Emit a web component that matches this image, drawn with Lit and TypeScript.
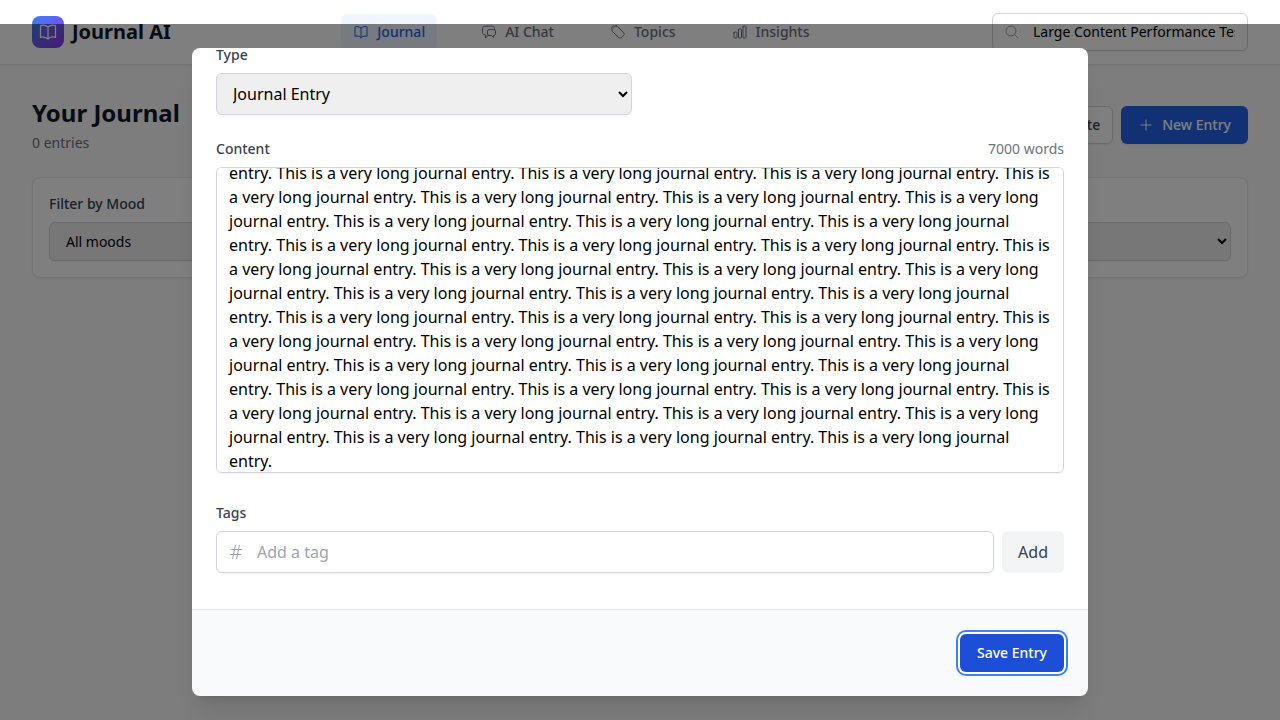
import { LitElement, html, css, svg } from "lit";
import { customElement, query } from "lit/decorators.js";
import { classMap } from "lit/directives/class-map.js";

const ICONS: Record<string, string[]> = {
  book: [
    "M12 6.042A8.967 8.967 0 0 0 6 3.75c-1.052 0-2.062.18-3 .512v14.25A8.987 8.987 0 0 1 6 18c2.305 0 4.408.867 6 2.292m0-14.25a8.966 8.966 0 0 1 6-2.292c1.052 0 2.062.18 3 .512v14.25A8.987 8.987 0 0 0 18 18a8.967 8.967 0 0 0-6 2.292m0-14.25v14.25",
  ],
  chat: [
    "M20.25 8.511c.884.284 1.5 1.128 1.5 2.097v4.286c0 1.136-.847 2.1-1.98 2.193-.34.027-.68.052-1.02.072v3.091l-3-3c-1.354 0-2.694-.055-4.02-.163a2.115 2.115 0 0 1-.825-.242m9.345-8.334a2.126 2.126 0 0 0-.476-.095 48.64 48.64 0 0 0-8.048 0c-1.131.094-1.976 1.057-1.976 2.192v4.286c0 .837.46 1.58 1.155 1.951m9.345-8.334V6.637c0-1.621-1.152-3.026-2.76-3.235A48.455 48.455 0 0 0 11.25 3c-2.115 0-4.198.137-6.24.402-1.608.209-2.76 1.614-2.76 3.235v6.226c0 1.621 1.152 3.026 2.76 3.235.577.075 1.157.14 1.74.194V21l4.155-4.155",
  ],
  tag: [
    "M9.568 3H5.25A2.25 2.25 0 0 0 3 5.25v4.318c0 .597.237 1.17.659 1.591l9.581 9.581c.699.699 1.78.872 2.607.33a18.095 18.095 0 0 0 5.223-5.223c.542-.827.369-1.908-.33-2.607L11.16 3.66A2.25 2.25 0 0 0 9.568 3Z",
    "M6 6h.008v.008H6V6Z",
  ],
  chart: [
    "M3 13.125C3 12.504 3.504 12 4.125 12h2.25c.621 0 1.125.504 1.125 1.125v6.75C7.5 20.496 6.996 21 6.375 21h-2.25A1.125 1.125 0 0 1 3 19.875v-6.75ZM9.75 8.625c0-.621.504-1.125 1.125-1.125h2.25c.621 0 1.125.504 1.125 1.125v11.25c0 .621-.504 1.125-1.125 1.125h-2.25a1.125 1.125 0 0 1-1.125-1.125V8.625ZM16.5 4.125c0-.621.504-1.125 1.125-1.125h2.25C20.496 3 21 3.504 21 4.125v15.75c0 .621-.504 1.125-1.125 1.125h-2.25a1.125 1.125 0 0 1-1.125-1.125V4.125Z",
  ],
  search: ["m21 21-5.197-5.197m0 0A7.5 7.5 0 1 0 5.196 5.196a7.5 7.5 0 0 0 10.607 10.607Z"],
  plus: ["M12 4.5v15m7.5-7.5h-15"],
  hash: ["M5.25 8.25h15m-16.5 7.5h15m-1.8-13.5-3.9 19.5m-2.1-19.5-3.9 19.5"],
};

const icon = (name: string) => html`<svg
  class="icon"
  viewBox="0 0 24 24"
  fill="none"
  stroke="currentColor"
  stroke-width="1.5"
  stroke-linecap="round"
  stroke-linejoin="round"
  aria-hidden="true"
>
  ${ICONS[name].map((d) => svg`<path d=${d}></path>`)}
</svg>`;

const shared = css`
  *,
  *::before,
  *::after {
    box-sizing: border-box;
  }
  h1,
  p {
    margin: 0;
  }
  button,
  input,
  select,
  textarea {
    font: inherit;
    color: #000;
    margin: 0;
  }
  .icon {
    display: block;
    flex: none;
    width: 16px;
    height: 16px;
  }
  .label {
    display: block;
    font-size: 14px;
    line-height: 20px;
    font-weight: 500;
    color: #374151;
  }
  .control {
    display: block;
    width: 100%;
    padding: 8px 12px;
    border: 1px solid #d1d5db;
    border-radius: 6px;
    box-shadow: 0 1px 2px rgb(0 0 0 / 0.05);
  }
  .field {
    display: flex;
    flex-direction: column;
    gap: 8px;
  }
  .with-icon {
    display: grid;
    align-items: center;
    color: #9ca3af;
  }
  .with-icon > * {
    grid-area: 1 / 1;
  }
  .with-icon .icon {
    margin-left: 12px;
    z-index: 1;
  }
  .with-icon .control {
    padding-left: 40px;
    min-width: 0;
  }
  .button {
    display: inline-flex;
    align-items: center;
    gap: 8px;
    padding: 8px 16px;
    border: 1px solid transparent;
    border-radius: 6px;
    font-size: 14px;
    line-height: 20px;
    font-weight: 500;
    color: #fff;
    background: #2563eb;
    box-shadow: 0 1px 2px rgb(0 0 0 / 0.05);
  }
`;

@customElement("app-header")
class AppHeader extends LitElement {
  static styles = [
    shared,
    css`
      :host {
        display: block;
        background: #fff;
        border-bottom: 1px solid #e5e7eb;
        box-shadow: 0 1px 2px rgb(0 0 0 / 0.05);
      }
      .bar {
        display: flex;
        align-items: center;
        justify-content: space-between;
        height: 64px;
        padding: 0 32px;
      }
      .brand {
        display: flex;
        align-items: center;
        gap: 8px;
        font-size: 20px;
        line-height: 28px;
        font-weight: 700;
        color: #111827;
      }
      .logo {
        display: grid;
        place-items: center;
        width: 32px;
        height: 32px;
        border-radius: 8px;
        color: #fff;
        background: linear-gradient(to bottom right, #3b82f6, #9333ea);
      }
      .logo .icon {
        width: 20px;
        height: 20px;
      }
      .nav {
        display: flex;
        gap: 32px;
      }
      .link {
        display: flex;
        align-items: center;
        gap: 8px;
        padding: 8px 12px;
        border-radius: 6px;
        font-size: 14px;
        line-height: 20px;
        font-weight: 500;
        color: #6b7280;
        text-decoration: none;
      }
      .active {
        color: #2563eb;
        background: #eff6ff;
      }
      .search {
        width: 256px;
        font-size: 14px;
        line-height: 20px;
      }
    `,
  ];

  private links = [
    { icon: "book", text: "Journal" },
    { icon: "chat", text: "AI Chat" },
    { icon: "tag", text: "Topics" },
    { icon: "chart", text: "Insights" },
  ];

  render() {
    return html`<header class="bar">
      <div class="brand"><span class="logo">${icon("book")}</span>Journal AI</div>
      <nav class="nav">
        ${this.links.map(
          (l, i) => html`<a class=${classMap({ link: true, active: i === 0 })} href="#">${icon(l.icon)}${l.text}</a>`
        )}
      </nav>
      <div class="with-icon search">
        ${icon("search")}
        <input class="control" type="text" aria-label="Search entries" .value=${"Large Content Performance Test"} />
      </div>
    </header>`;
  }
}

@customElement("journal-page")
class JournalPage extends LitElement {
  static styles = [
    shared,
    css`
      :host {
        display: block;
      }
      .page {
        display: flex;
        flex-direction: column;
        gap: 24px;
        padding: 32px;
      }
      .top {
        display: flex;
        align-items: center;
        justify-content: space-between;
      }
      .title {
        font-size: 24px;
        line-height: 32px;
        font-weight: 700;
        color: #111827;
      }
      .count {
        margin-top: 4px;
        font-size: 14px;
        line-height: 20px;
        color: #6b7280;
      }
      .actions {
        display: flex;
        gap: 8px;
      }
      .plain {
        padding: 8px 12px;
        color: #374151;
        background: #fff;
        border-color: #d1d5db;
      }
      .filters {
        display: grid;
        grid-template-columns: repeat(2, 1fr);
        gap: 16px;
        padding: 16px;
        border: 1px solid #e5e7eb;
        border-radius: 8px;
        background: #fff;
        box-shadow: 0 1px 2px rgb(0 0 0 / 0.05);
      }
      .filters .control {
        font-size: 14px;
      }
    `,
  ];

  render() {
    return html`<main class="page">
      <div class="top">
        <div>
          <h1 class="title">Your Journal</h1>
          <p class="count">0 entries</p>
        </div>
        <div class="actions">
          <button class="button plain" type="button">Generate</button>
          <button class="button" type="button">${icon("plus")}New Entry</button>
        </div>
      </div>
      <section class="filters">
        <div class="field">
          <label class="label" for="mood">Filter by Mood</label>
          <select class="control" id="mood"><option>All moods</option></select>
        </div>
        <div class="field">
          <label class="label" for="kind">Filter by Type</label>
          <select class="control" id="kind"><option>All types</option></select>
        </div>
      </section>
    </main>`;
  }
}

@customElement("entry-dialog")
class EntryDialog extends LitElement {
  static styles = [
    shared,
    css`
      :host {
        position: fixed;
        inset: 0;
        z-index: 10;
        display: flex;
        align-items: center;
        justify-content: center;
        margin-top: 24px;
        padding: 16px;
        background: rgb(0 0 0 / 0.5);
      }
      .dialog {
        width: 100%;
        max-width: 896px;
        max-height: 90vh;
        overflow-y: auto;
        scrollbar-width: none;
        border-radius: 8px;
        background: #fff;
        box-shadow: 0 20px 25px -5px rgb(0 0 0 / 0.1), 0 8px 10px -6px rgb(0 0 0 / 0.1);
      }
      .body {
        display: flex;
        flex-direction: column;
        gap: 24px;
        padding: 24px 24px 36px;
      }
      .row {
        display: grid;
        grid-template-columns: repeat(2, 1fr);
        gap: 16px;
      }
      .head {
        display: flex;
        justify-content: space-between;
      }
      .words {
        font-size: 14px;
        line-height: 20px;
        color: #6b7280;
      }
      .content {
        margin-bottom: 6px;
        resize: none;
        scrollbar-width: none;
      }
      .tags {
        display: flex;
        gap: 8px;
      }
      .tags .with-icon {
        flex: 1;
      }
      .control::placeholder {
        color: #9ca3af;
      }
      .add {
        padding: 8px 16px;
        border: 0;
        border-radius: 6px;
        color: #374151;
        background: #f3f4f6;
      }
      .foot {
        display: flex;
        justify-content: flex-end;
        padding: 24px;
        border-top: 1px solid #e5e7eb;
        background: #f9fafb;
      }
      .save {
        background: #1d4ed8;
        box-shadow: 0 0 0 2px #fff, 0 0 0 4px #3b82f6;
      }
    `,
  ];

  @query(".dialog") dialog!: HTMLElement;
  @query(".content") content!: HTMLTextAreaElement;

  private text = "This is a very long journal entry. ".repeat(1000);

  async firstUpdated() {
    this.scrollToEnd();
    await document.fonts.ready;
    this.scrollToEnd();
  }

  private scrollToEnd() {
    const below = parseInt(getComputedStyle(this.content).paddingBottom, 10) + 1;
    this.content.scrollTop = this.content.scrollHeight - this.content.clientHeight - below;
    this.dialog.scrollTop = this.dialog.scrollHeight;
  }

  render() {
    const words = this.text.trim().split(" ").length;
    return html`<form class="dialog" role="dialog" aria-label="Entry">
      <div class="body">
        <div class="row">
          <div class="field">
            <label class="label" for="type">Type</label>
            <select class="control" id="type"><option>Journal Entry</option></select>
          </div>
        </div>
        <div class="field">
          <div class="head">
            <label class="label" for="content">Content</label>
            <span class="words">${words} words</span>
          </div>
          <textarea class="control content" id="content" rows="12" spellcheck="false" .value=${this.text}></textarea>
        </div>
        <div class="field">
          <label class="label" for="tag">Tags</label>
          <div class="tags">
            <div class="with-icon">
              ${icon("hash")}
              <input class="control" id="tag" type="text" placeholder="Add a tag" />
            </div>
            <button class="add" type="button">Add</button>
          </div>
        </div>
      </div>
      <div class="foot"><button class="button save" type="button">Save Entry</button></div>
    </form>`;
  }
}

@customElement("app-root")
class AppRoot extends LitElement {
  static styles = css`
    :host {
      display: block;
      min-height: 100vh;
      font-family: "Noto Sans", sans-serif;
      font-size: 16px;
      line-height: 24px;
      background: #f8fbf9;
    }
  `;

  render() {
    return html`<app-header></app-header><journal-page></journal-page><entry-dialog></entry-dialog>`;
  }
}
